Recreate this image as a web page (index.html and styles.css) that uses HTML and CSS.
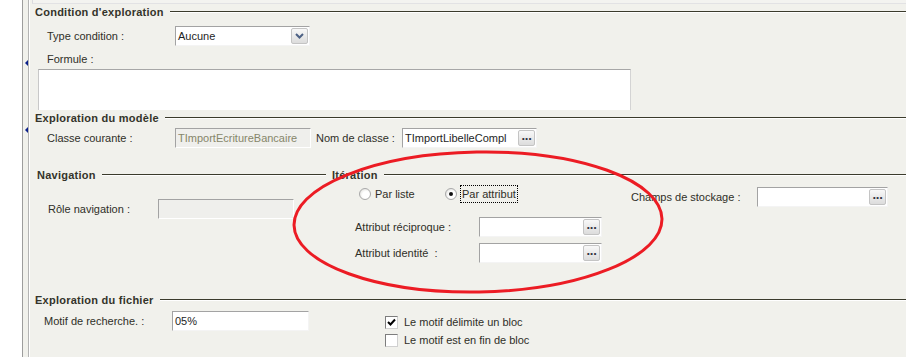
FILE: index.html
```html
<!DOCTYPE html>
<html>
<head>
    <title>Exploration</title>
    <meta charset="UTF-8">
    <link rel="stylesheet" href="styles.css">
</head>
<body>
<div class="page">
    <div class="gutter"></div>
    <div class="splitter">
        <span class="arrow arrow-one"></span>
        <span class="arrow arrow-two"></span>
    </div>
    <div class="panel">
        <div class="topbox"></div>

        <div class="legend"><span class="legend-text">Condition d'exploration</span><span class="legend-line"></span></div>
        <div class="row row-type">
            <label class="lbl lbl-type">Type condition :</label>
            <div class="field select">
                <span class="field-text">Aucune</span>
                <span class="btn">
                    <svg width="9" height="6" viewBox="0 0 9 6"><path d="M1 1 L4.5 4.5 L8 1" fill="none" stroke="#4d6185" stroke-width="2"/></svg>
                </span>
            </div>
        </div>
        <div class="row row-formule"><label class="lbl">Formule :</label></div>
        <div class="memo"></div>

        <div class="legend legend-modele"><span class="legend-text">Exploration du modèle</span><span class="legend-line"></span></div>
        <div class="row row-classe">
            <label class="lbl lbl-type">Classe courante :</label>
            <div class="field field-disabled w-classe"><span class="field-text">TImportEcritureBancaire</span></div>
            <label class="lbl lbl-nom">Nom de classe :</label>
            <div class="field w-nom">
                <span class="field-text">TImportLibelleCompl</span>
                <span class="btn btn-dots">&middot;&middot;&middot;</span>
            </div>
        </div>

        <div class="split">
            <div class="nav-col">
                <div class="legend legend-nav"><span class="legend-text">Navigation</span><span class="legend-line"></span></div>
                <div class="row row-role">
                    <label class="lbl lbl-role">Rôle navigation :</label>
                    <div class="field field-disabled w-role"></div>
                </div>
            </div>
            <div class="iter-col">
                <div class="legend legend-iter"><span class="legend-text">Itération</span><span class="legend-line"></span></div>
                <div class="iter-body">
                    <div class="iter-left">
                        <div class="radios">
                            <span class="radio-item radio-liste"><span class="radio"></span><span class="radio-label">Par liste</span></span>
                            <span class="radio-item"><span class="radio radio-on"></span><span class="radio-label focused">Par attribut</span></span>
                        </div>
                        <div class="row row-attr">
                            <label class="lbl lbl-attr">Attribut réciproque :</label>
                            <div class="field w-attr"><span class="btn btn-dots">&middot;&middot;&middot;</span></div>
                        </div>
                        <div class="row row-attr row-attr-two">
                            <label class="lbl lbl-attr">Attribut identité&nbsp; :</label>
                            <div class="field w-attr"><span class="btn btn-dots">&middot;&middot;&middot;</span></div>
                        </div>
                    </div>
                    <div class="row row-champs">
                        <label class="lbl lbl-champs">Champs de stockage :</label>
                        <div class="field w-champs"><span class="btn btn-dots">&middot;&middot;&middot;</span></div>
                    </div>
                </div>
            </div>
        </div>

        <div class="legend legend-fichier"><span class="legend-text">Exploration du fichier</span><span class="legend-line"></span></div>
        <div class="row row-motif">
            <label class="lbl lbl-motif">Motif de recherche. :</label>
            <div class="field w-motif"><span class="field-text">05%</span></div>
            <div class="checks">
                <div class="check-row">
                    <span class="check">
                        <svg width="9" height="9" viewBox="0 0 9 9"><path d="M1 4 L3.5 6.5 L8 1.5" fill="none" stroke="#000" stroke-width="2"/></svg>
                    </span>
                    <span class="check-label">Le motif délimite un bloc</span>
                </div>
                <div class="check-row">
                    <span class="check"></span>
                    <span class="check-label">Le motif est en fin de bloc</span>
                </div>
            </div>
        </div>
    </div>

    <svg class="mark" width="906" height="357" viewBox="0 0 906 357">
        <ellipse cx="478" cy="222" rx="184" ry="70" transform="rotate(-1 478 222)" fill="none" stroke="#ec1c24" stroke-width="3"/>
    </svg>
</div>
</body>
</html>
```

FILE: styles.css
```css
* {
    box-sizing: border-box;
}

body {
    margin: 0;
    padding: 0;
    font-family: 'Liberation Sans', Arial, sans-serif;
    font-size: 11px;
    color: #2f2f28;
    background: #ffffff;
}

.page {
    position: relative;
    display: flex;
    width: 906px;
    height: 357px;
    overflow: hidden;
}

.gutter {
    width: 22px;
    background: #ffffff;
}

.splitter {
    position: relative;
    width: 7px;
    background: #f1f1ec;
    border-left: 1px solid #9d9d9d;
    border-right: 1px solid #b4b4b4;
}

.arrow {
    position: absolute;
    left: 2px;
    width: 0;
    height: 0;
    border-top: 3px solid transparent;
    border-bottom: 3px solid transparent;
    border-right: 3px solid #0a1f8a;
}

.arrow-one {
    top: 60px;
}

.arrow-two {
    top: 127px;
}

.panel {
    flex: 1;
    background: #f1f1ec;
    border-left: 1px solid #ffffff;
}

.topbox {
    height: 4px;
    margin-left: 2px;
    background: #f3f3f0;
    border-left: 1px solid #dadade;
    border-bottom: 1px solid #e2e2e4;
}

/* titres de groupe */
.legend {
    display: flex;
    align-items: center;
    height: 16px;
    padding-left: 5px;
}

.legend-text {
    font-weight: bold;
    font-size: 11px;
    letter-spacing: 0.25px;
    color: #34342a;
    white-space: nowrap;
}

.legend-line {
    flex: 1;
    height: 2px;
    margin-left: 6px;
    border-top: 1px solid #3b3b2c;
    border-bottom: 1px solid #ffffff;
}

.legend-modele {
    margin-top: 0;
}

.row {
    display: flex;
    align-items: center;
}

.lbl {
    display: block;
    white-space: nowrap;
}

.row-type {
    height: 20px;
    margin-top: 6px;
    padding-left: 17px;
}

.lbl-type {
    width: 128px;
}

.row-formule {
    height: 14px;
    margin-top: 6px;
    padding-left: 17px;
}

.memo {
    width: 593px;
    height: 41px;
    margin-top: 3px;
    margin-left: 8px;
    background: #ffffff;
    border-top: 1px solid #a7a7a7;
    border-left: 1px solid #c8c8c8;
    border-right: 1px solid #d4d4d4;
}

/* champs */
.field {
    position: relative;
    display: flex;
    align-items: center;
    height: 20px;
    background: #ffffff;
    border-top: 1px solid #a3a3a3;
    border-left: 1px solid #a3a3a3;
    border-right: 1px solid #f4f4f4;
    border-bottom: 1px solid #f4f4f4;
}

.field-text {
    padding-left: 2px;
    color: #1e1e1e;
}

.field-disabled {
    background: #efefec;
    border-right-color: #ffffff;
    border-bottom-color: #ffffff;
}

.field-disabled .field-text {
    color: #86866a;
}

.select {
    width: 135px;
}

.btn {
    position: absolute;
    right: 1px;
    top: 1px;
    width: 17px;
    height: 16px;
    display: flex;
    align-items: center;
    justify-content: center;
    border: 1px solid #c4c4c4;
    border-radius: 2px;
    background: linear-gradient(#f8f8f8, #dcdcdc);
}

.btn-dots {
    font-size: 13px;
    font-weight: bold;
    letter-spacing: -1px;
    color: #333340;
    line-height: 10px;
    padding-top: 2px;
}

.row-classe {
    height: 20px;
    margin-top: 2px;
    padding-left: 17px;
}

.w-classe {
    width: 136px;
}

.lbl-nom {
    width: 91px;
    padding-left: 5px;
}

.w-nom {
    width: 135px;
}

/* navigation / itération */
.split {
    display: flex;
    margin-top: 19px;
}

.nav-col {
    width: 298px;
}

.legend-nav {
    padding-left: 7px;
}

.legend-nav .legend-line {
    margin-right: 2px;
}

.row-role {
    height: 20px;
    margin-top: 16px;
    padding-left: 18px;
}

.lbl-role {
    width: 110px;
}

.w-role {
    width: 136px;
}

.iter-col {
    flex: 1;
}

.legend-iter {
    padding-left: 4px;
}

.iter-body {
    display: flex;
}

.iter-left {
    width: 303px;
}

.radios {
    display: flex;
    align-items: center;
    height: 17px;
    margin-top: 2px;
    padding-left: 31px;
}

.radio-item {
    display: flex;
    align-items: center;
}

.radio-liste {
    width: 86px;
}

.radio {
    position: relative;
    width: 12px;
    height: 12px;
    margin-right: 4px;
    border-radius: 50%;
    border: 1px solid #a9a9a9;
    background: radial-gradient(circle at 60% 60%, #ffffff 40%, #d6d6d0 100%);
}

.radio-on::after {
    content: "";
    position: absolute;
    left: 3px;
    top: 3px;
    width: 4px;
    height: 4px;
    border-radius: 50%;
    background: #111111;
}

.focused {
    border: 1px dotted #000000;
    padding: 2px 1px;
    margin-left: -1px;
}

.row-attr {
    height: 20px;
    margin-top: 15px;
    padding-left: 27px;
}

.row-attr-two {
    margin-top: 6px;
}

.lbl-attr {
    width: 124px;
}

.w-attr {
    width: 123px;
}

.row-champs {
    height: 21px;
    margin-top: 3px;
    align-self: flex-start;
}

.lbl-champs {
    width: 126px;
}

.w-champs {
    width: 131px;
}

/* fichier */
.legend-fichier {
    margin-top: 29px;
}

.row-motif {
    align-items: flex-start;
    margin-top: 3px;
    padding-left: 14px;
}

.lbl-motif {
    width: 128px;
    line-height: 20px;
}

.w-motif {
    width: 137px;
}

.checks {
    margin-left: 76px;
    margin-top: 2px;
}

.check-row {
    display: flex;
    align-items: center;
    height: 18px;
}

.check {
    display: flex;
    align-items: center;
    justify-content: center;
    width: 13px;
    height: 13px;
    margin-right: 6px;
    background: #ffffff;
    border-top: 1px solid #7d7d7d;
    border-left: 1px solid #7d7d7d;
    border-right: 1px solid #d0d0d0;
    border-bottom: 1px solid #d0d0d0;
}

.mark {
    position: absolute;
    left: 0;
    top: 0;
    pointer-events: none;
}
```
